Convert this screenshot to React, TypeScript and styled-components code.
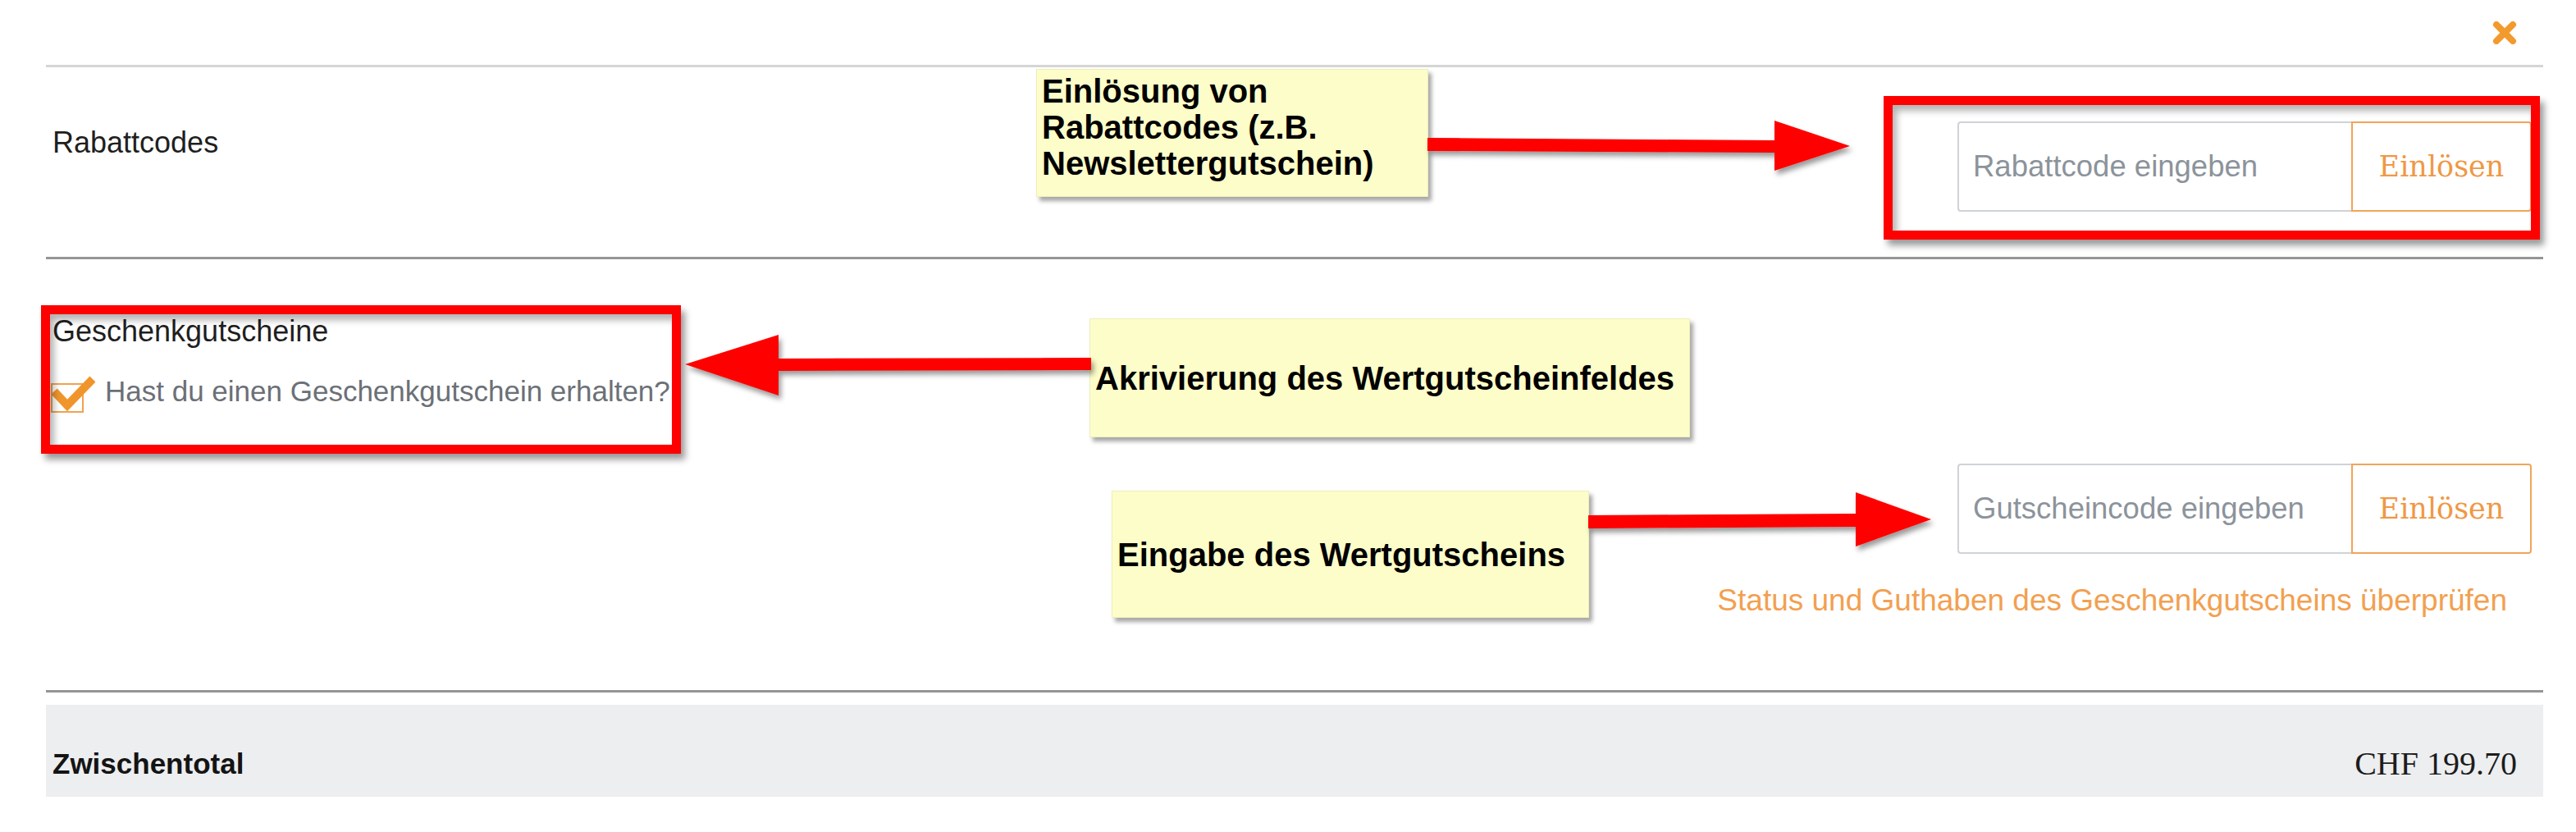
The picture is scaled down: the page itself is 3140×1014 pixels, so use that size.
import styled, { createGlobalStyle } from "styled-components";

const GlobalStyle = createGlobalStyle`
  html, body {
    margin: 0;
    padding: 0;
    background: #ffffff;
  }

  body {
    font-family: "Liberation Sans", Arial, sans-serif;
    color: #222;
  }
`;

const Page = styled.div`
  position: relative;
  width: 3140px;
  height: 1014px;
  box-sizing: border-box;
  padding: 0 40px 0 56px;
  overflow: hidden;
`;

const TopBar = styled.div`
  display: flex;
  justify-content: flex-end;
  align-items: center;
  height: 79px;
  padding-right: 32px;
`;

type SectionProps = {
  $line: "light" | "dark";
};

const Section = styled.section<SectionProps>`
  display: flex;
  border-top: 3px solid ${(p) => (p.$line === "light" ? "#d5d5d5" : "#959595")};
`;

const DiscountSection = styled(Section)`
  justify-content: space-between;
  align-items: flex-start;
  padding: 66px 14px 55px 8px;
`;

const GiftSection = styled(Section)`
  flex-direction: column;
  padding: 68px 14px 89px 8px;
`;

const Label = styled.div<{ $offset?: number }>`
  font-size: 36px;
  line-height: 40px;
  color: #1f1f1f;
  margin-top: ${(p) => p.$offset ?? 0}px;
`;

const CheckRow = styled.label`
  display: flex;
  align-items: flex-start;
  gap: 12px;
  margin-top: 33px;
  margin-left: -2px;
`;

const CheckText = styled.span`
  font-size: 35px;
  line-height: 40px;
  color: #6b7077;
`;

const RedeemBlock = styled.div`
  display: flex;
  flex-direction: column;
  align-items: flex-end;
  align-self: flex-end;
  margin-top: 61px;
`;

const CodeForm = styled.div`
  display: flex;
  height: 110px;
`;

const CodeInput = styled.input`
  width: 480px;
  box-sizing: border-box;
  border: 2px solid #cfd3d7;
  border-right: none;
  border-radius: 4px 0 0 4px;
  padding: 0 17px;
  font-family: "Liberation Sans", Arial, sans-serif;
  font-size: 36.5px;
  color: #333;
  outline: none;

  &::placeholder {
    color: #8c939b;
  }
`;

const RedeemButton = styled.button`
  width: 220px;
  box-sizing: border-box;
  border: 2px solid #f2a458;
  border-radius: 0 4px 4px 0;
  background: #ffffff;
  color: #ef9845;
  font-family: "DejaVu Serif", "Liberation Serif", serif;
  font-size: 35px;
  cursor: pointer;
`;

const StatusLink = styled.a`
  margin-top: 37px;
  margin-right: 30px;
  font-size: 37px;
  line-height: 40px;
  color: #f2a050;
  text-decoration: none;
`;

const Footer = styled.div`
  border-top: 3px solid #959595;
  padding-top: 15px;
`;

const TotalBar = styled.div`
  display: flex;
  justify-content: space-between;
  align-items: flex-end;
  height: 112px;
  box-sizing: border-box;
  padding: 0 32px 20px 8px;
  background: #edeef0;
`;

const TotalLabel = styled.span`
  font-size: 35px;
  line-height: 40px;
  font-weight: bold;
  color: #141414;
`;

const TotalValue = styled.span`
  font-family: "Liberation Serif", serif;
  font-size: 40px;
  line-height: 40px;
  color: #1c1c1c;
`;

// --- annotation overlay (screenshot markup) ---

type Box = { $left: number; $top: number; $width: number; $height: number };

const Note = styled.div<Box & { $center?: boolean }>`
  position: absolute;
  left: ${(p) => p.$left}px;
  top: ${(p) => p.$top}px;
  width: ${(p) => p.$width}px;
  height: ${(p) => p.$height}px;
  box-sizing: border-box;
  display: flex;
  align-items: ${(p) => (p.$center ? "center" : "flex-start")};
  padding: 4px 6px;
  background: #fdfdc9;
  border: 1px solid #eeeebb;
  box-shadow: 4px 5px 5px rgba(0, 0, 0, 0.35);
  font-size: 40px;
  line-height: 44px;
  font-weight: bold;
  color: #000;
`;

const Highlight = styled.div<Box>`
  position: absolute;
  left: ${(p) => p.$left}px;
  top: ${(p) => p.$top}px;
  width: ${(p) => p.$width}px;
  height: ${(p) => p.$height}px;
  box-sizing: border-box;
  border: 11px solid #ff0000;
  box-shadow: 5px 7px 8px rgba(0, 0, 0, 0.4), inset 5px 7px 8px rgba(0, 0, 0, 0.3);
  pointer-events: none;
`;

const ArrowSvg = styled.svg<{ $left: number; $top: number }>`
  position: absolute;
  left: ${(p) => p.$left}px;
  top: ${(p) => p.$top}px;
  overflow: visible;
`;

const CloseIcon = () => (
  <svg width="30" height="28" viewBox="0 0 30 28">
    <path d="M5 4 L25 24 M25 4 L5 24" stroke="#f39a2c" strokeWidth="8" strokeLinecap="round" />
  </svg>
);

const CheckIcon = () => (
  <svg width="54" height="46" viewBox="0 0 54 46" style={{ marginTop: 1, flexShrink: 0 }}>
    <rect x="1" y="10" width="38" height="34" fill="none" stroke="#f2a24e" strokeWidth="2" />
    <path d="M4 19 L20 36 L51 4" fill="none" stroke="#f0952c" strokeWidth="10" strokeLinejoin="miter" />
  </svg>
);

const Arrow = ({ left, top, width, height, points }: { left: number; top: number; width: number; height: number; points: string }) => (
  <ArrowSvg $left={left} $top={top} width={width} height={height}>
    <defs>
      <filter id={`shadow-${left}`} x="-10%" y="-30%" width="130%" height="170%">
        <feDropShadow dx="3" dy="5" stdDeviation="3" floodColor="#000" floodOpacity="0.4" />
      </filter>
    </defs>
    <polygon points={points} fill="#ff0000" filter={`url(#shadow-${left})`} />
  </ArrowSvg>
);

const CouponForm = ({ placeholder }: { placeholder: string }) => (
  <CodeForm>
    <CodeInput placeholder={placeholder} />
    <RedeemButton>Einlösen</RedeemButton>
  </CodeForm>
);

export default function App() {
  return (
    <>
      <GlobalStyle />
      <Page>
        <TopBar>
          <CloseIcon />
        </TopBar>

        <DiscountSection $line="light">
          <Label $offset={6}>Rabattcodes</Label>
          <CouponForm placeholder="Rabattcode eingeben" />
        </DiscountSection>

        <GiftSection $line="dark">
          <Label>Geschenkgutscheine</Label>
          <CheckRow>
            <CheckIcon />
            <CheckText>Hast du einen Geschenkgutschein erhalten?</CheckText>
          </CheckRow>
          <RedeemBlock>
            <CouponForm placeholder="Gutscheincode eingeben" />
            <StatusLink href="#">Status und Guthaben des Geschenkgutscheins überprüfen</StatusLink>
          </RedeemBlock>
        </GiftSection>

        <Footer>
          <TotalBar>
            <TotalLabel>Zwischentotal</TotalLabel>
            <TotalValue>CHF 199.70</TotalValue>
          </TotalBar>
        </Footer>

        <Highlight $left={2296} $top={117} $width={800} $height={175} />
        <Highlight $left={50} $top={372} $width={780} $height={181} />

        <Note $left={1263} $top={84} $width={478} $height={156}>
          Einlösung von
          <br />
          Rabattcodes (z.B.
          <br />
          Newslettergutschein)
        </Note>
        <Note $left={1328} $top={388} $width={732} $height={145} $center>
          Akrivierung des Wertgutscheinfeldes
        </Note>
        <Note $left={1355} $top={598} $width={582} $height={155} $center>
          Eingabe des Wertgutscheins
        </Note>

        <Arrow left={1740} top={140} width={530} height={90} points="0,28 423,31 423,7 515,38 423,68 423,46 0,44" />
        <Arrow left={825} top={400} width={520} height={100} points="10,44 124,8 124,37 505,36 505,51 124,52 124,82" />
        <Arrow left={1936} top={590} width={440} height={90} points="0,38 326,36 326,10 418,43 326,76 326,52 0,54" />
      </Page>
    </>
  );
}
